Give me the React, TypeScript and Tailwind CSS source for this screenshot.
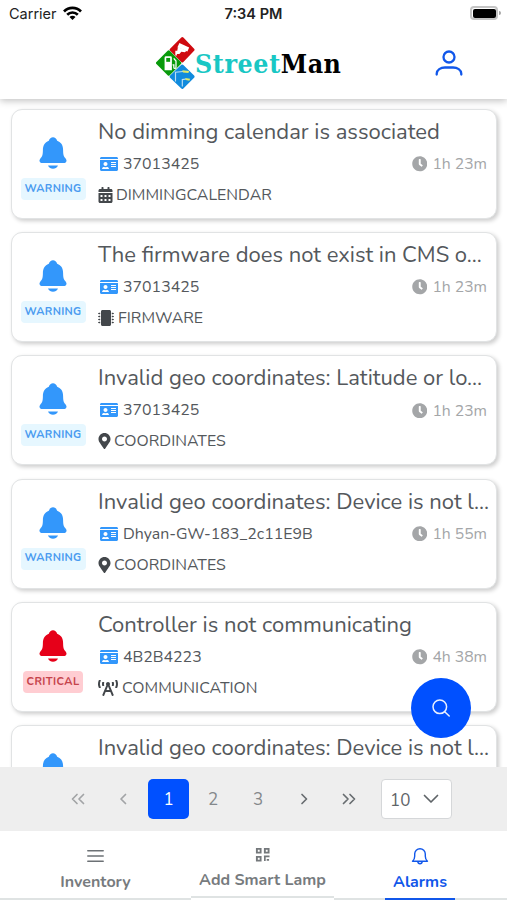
import React from "react";
import { FaIdCard, FaCalendarAlt, FaMicrochip, FaMapMarkerAlt, FaBroadcastTower, FaClock } from "react-icons/fa";
import { IoNotifications } from "react-icons/io5";

type Alarm = {
  title: string;
  critical?: boolean;
  details?: {
    id: string;
    age: string;
    kind: string;
    kindClass: string;
    icon: React.ReactNode;
  };
};

const pin = <FaMapMarkerAlt className="h-4 w-[13px]" />;

const alarms: Alarm[] = [
  { title: "No dimming calendar is associated", details: { id: "37013425", age: "1h 23m", kind: "DIMMINGCALENDAR", kindClass: "ml-[3px]", icon: <FaCalendarAlt className="h-4 w-[15px]" /> } },
  { title: "The firmware does not exist in CMS o...", details: { id: "37013425", age: "1h 23m", kind: "FIRMWARE", kindClass: "ml-[4px]", icon: <FaMicrochip className="h-4 w-4" /> } },
  { title: "Invalid geo coordinates: Latitude or lo...", details: { id: "37013425", age: "1h 23m", kind: "COORDINATES", kindClass: "ml-[3px]", icon: pin } },
  { title: "Invalid geo coordinates: Device is not l...", details: { id: "Dhyan-GW-183_2c11E9B", age: "1h 55m", kind: "COORDINATES", kindClass: "ml-[3px]", icon: pin } },
  { title: "Controller is not communicating", critical: true, details: { id: "4B2B4223", age: "4h 38m", kind: "COMMUNICATION", kindClass: "ml-[4px]", icon: <FaBroadcastTower className="h-4 w-5" /> } },
  { title: "Invalid geo coordinates: Device is not l..." },
];

function AlarmCard({ alarm }: { alarm: Alarm }) {
  const { title, critical, details } = alarm;
  return (
    <article className="flex h-[110px] shrink-0 rounded-[11px] border border-[#e1e3e4] bg-white shadow-[2px_2px_4px_rgba(0,0,0,0.2)]">
      <div className="flex w-[82px] shrink-0 flex-col items-center pt-[25px]">
        <IoNotifications className={critical ? "h-[36px] w-[36px] text-[#e60019]" : "h-[36px] w-[36px] text-[#3397fb]"} />
        {details && (
          <span
            className={
              critical
                ? "mt-[7px] flex h-[22px] w-[60px] items-center justify-center rounded-[4px] bg-[#ffcdd2] text-[11px] font-bold tracking-[0.4px] text-[#c5434b]"
                : "mt-[7px] flex h-[22px] w-[65px] items-center justify-center rounded-[4px] bg-[#e6f7ff] text-[11px] font-bold tracking-[0.3px] text-[#4a9bf0]"
            }
          >
            {critical ? "CRITICAL" : "WARNING"}
          </span>
        )}
      </div>
      <div className="min-w-0 flex-1 pl-1 pr-[9px] text-[15.900px] text-[#54585c]">
        <h2 className="mt-[8px] h-7 whitespace-nowrap text-[22px] leading-7">{title}</h2>
        {details && (
          <>
            <div className="mt-[6px] flex h-6 items-center pl-[2px]">
              <FaIdCard className="h-4 w-[18px] text-[#3397fb]" />
              <span className="ml-[5px] pt-[2px]">{details.id}</span>
              <span className="ml-auto flex items-center text-[#a4a6a8]">
                <FaClock className="mr-[5px] h-[15.500px] w-[15.500px]" />
                <span className="pt-[2px] text-[15.700px]">{details.age}</span>
              </span>
            </div>
            <div className="mt-[7px] flex h-6 items-center text-[#43474b]">
              {details.icon}
              <span className={`pt-[2px] text-[#54585c] ${details.kindClass}`}>{details.kind}</span>
            </div>
          </>
        )}
      </div>
    </article>
  );
}

function Logo() {
  return (
    <div className="flex items-center">
      <svg className="h-[54px] w-[39px]" viewBox="0 0 40 54">
        <g strokeLinejoin="round" strokeWidth="3">
          <path d="M27 2 38 13.500 27 25 15.500 13.500Z" fill="#cf0a10" stroke="#cf0a10" />
          <path d="M13 15.500 24.500 27 13 38.500 1.500 27Z" fill="#089a0b" stroke="#089a0b" />
          <path d="M27 30 38 41 27 52 15.500 41Z" fill="#118bdd" stroke="#118bdd" />
        </g>
        <path d="m24 6.500 10 4.500-1.800 4.200L22 10.800Z" fill="#fff" />
        <path d="m22.500 10.500 9 4-2 1.600-3.500-.6-2 2.300h-2.600v1.400h-1.600v-4.800h2Z" fill="#fff" />
        <path d="M8.800 34.500V21.500q0-1.500 1.500-1.500h4.500q1.500 0 1.500 1.500v13Z" fill="#fff" />
        <path d="M17 29h1.300v2.500c0 1.500 2.200 1.500 2.200 0V25l-2.300-2.800" fill="none" stroke="#fff" strokeWidth="1.300" />
        <path d="M10.500 21.800h4v4h-4Z" fill="#089a0b" />
        <path d="M20 46V36.500l8-.8M27 51v-7l4-.6" fill="none" stroke="#b9def3" strokeWidth="1.200" />
        <path d="m27 34.500 7 .6-.8 2.200-5.500-.6Z M30 42.500l5 .6-.8 2-3.600-.6Z" fill="#e2e968" />
      </svg>
      <div className="flex h-[34px] whitespace-nowrap pt-px font-['DejaVu_Serif_Condensed','DejaVu_Serif','Liberation_Serif',serif] text-[26.500px] font-bold leading-[34px] [font-stretch:condensed]">
        <span className="tracking-[0.600px] text-[#19c7c4]">Street</span>
        <span className="tracking-[0.500px] text-black">Man</span>
      </div>
    </div>
  );
}

function Chevron({ d, muted }: { d: string; muted?: boolean }) {
  return (
    <svg className={muted ? "size-4 text-[#a2a4a6]" : "size-4 text-[#686d70]"} viewBox="0 0 16 16" fill="none" stroke="currentColor" strokeWidth="1.700" strokeLinecap="round" strokeLinejoin="round">
      <path d={d} />
    </svg>
  );
}

function Paginator() {
  return (
    <div className="flex h-[64px] shrink-0 items-center bg-[#eeeeee] pl-[58px] text-[17px] text-[#84888b]">
      <button className="flex w-10 justify-center"><Chevron muted d="M7 3.500 2.500 8l4.500 4.500M13.500 3.500 9 8l4.500 4.500" /></button>
      <button className="ml-[5px] flex w-10 justify-center"><Chevron muted d="M10.500 3.500 6 8l4.500 4.500" /></button>
      <button className="ml-[5px] h-10 w-[41px] rounded-[5px] bg-[#0050ff] pt-px text-white">1</button>
      <button className="ml-[4px] w-10 pt-px">2</button>
      <button className="ml-[5px] w-10 pt-px">3</button>
      <button className="ml-[6px] flex w-10 justify-center"><Chevron d="M6 3.500 10.500 8 6 12.500" /></button>
      <button className="ml-[5px] flex w-10 justify-center"><Chevron d="M2.500 3.500 7 8l-4.500 4.500M9 3.500 13.500 8 9 12.500" /></button>
      <button className="ml-[12px] flex h-10 w-[71px] items-center rounded-[4px] border border-[#d5d7d9] bg-white pl-[8px] text-[#5f6468]">
        <span className="pt-[4px]">10</span>
        <svg className="ml-[13px] h-4 w-4" viewBox="0 0 16 16" fill="none" stroke="currentColor" strokeWidth="1.700" strokeLinecap="round" strokeLinejoin="round"><path d="m1.500 4.500 6.500 6.500 6.500-6.500" /></svg>
      </button>
    </div>
  );
}

export default function App() {
  return (
    <div className="flex h-[900px] w-[507px] flex-col overflow-hidden bg-white font-['Nunito',Lato,'Open_Sans',sans-serif]">
      <header className="relative z-10 h-[99px] shrink-0 bg-white shadow-[0_2px_7px_rgba(0,0,0,0.24)]">
        <div className="grid h-[28px] grid-cols-3 items-center font-['Inter','Liberation_Sans',sans-serif] text-[14px] text-[#222]">
          <div className="flex items-center pl-[9px]">
            <span className="text-[14.500px]">Carrier</span>
            <svg className="mb-[2px] ml-[6px] h-[14px] w-[19px]" viewBox="0 0 19 14" fill="none" stroke="#000" strokeWidth="2.700">
              <path d="M1 5.500a12 12 0 0 1 17 0M4.200 8.700a7.500 7.500 0 0 1 10.600 0" />
              <path d="M9.500 14 6.500 11a4.200 4.200 0 0 1 6 0Z" fill="#000" stroke="none" />
            </svg>
          </div>
          <div className="pb-px text-center text-[14.500px] font-semibold">7:34 PM</div>
          <div className="flex items-center justify-end pb-[2px] pr-[6px]">
            <div className="h-[14px] w-[28px] rounded-[4px] border-2 border-[#c4c4c4] p-[0.500px]"><div className="h-full w-full rounded-[2px] bg-black" /></div>
            <div className="ml-px h-[4px] w-[2px] rounded-r bg-[#a5a5a5]" />
          </div>
        </div>
        <div className="flex h-[70px] items-center justify-between pl-[156px] pr-[44px]">
          <Logo />
          <svg className="h-[26px] w-[28px]" viewBox="0 0 28 26" fill="none" stroke="#1157ea" strokeWidth="2.300" strokeLinecap="round">
            <circle cx="14" cy="7" r="5.500" />
            <path d="M1.700 24.500v-.7c0-4 4-6.300 8.300-6.300h8c4.300 0 8.300 2.300 8.300 6.300v.7" />
          </svg>
        </div>
      </header>
      <main className="flex min-h-0 flex-1 flex-col gap-[13.200px] overflow-hidden pl-[11px] pr-[10px] pt-[10px]">
        {alarms.map((alarm, i) => <AlarmCard key={i} alarm={alarm} />)}
      </main>
      <button className="absolute left-[411px] top-[678px] z-20 flex h-[60px] w-[60px] items-center justify-center rounded-full bg-[#0050ff]">
        <svg className="h-[18px] w-[18px]" viewBox="0 0 18 18" fill="none" stroke="#e8efff" strokeWidth="1.500" strokeLinecap="round"><circle cx="7.800" cy="7.800" r="6.800" /><path d="m12.700 12.700 4.500 4.300" /></svg>
      </button>
      <Paginator />
      <nav className="flex h-[69px] shrink-0 items-start text-[16px] font-bold text-[#777b7e]">
        <div className="flex h-[69px] w-[191px] flex-col items-center border-b-2 border-[#dfe3e3] pt-[17px]">
          <svg className="h-4 w-[17px]" viewBox="0 0 17 16" stroke="#6c7175" strokeWidth="1.500" strokeLinecap="round"><path d="M.8 2.700h15.400M.8 8h15.400M.8 13.300h15.400" /></svg>
          <span className="mt-[6px]">Inventory</span>
        </div>
        <div className="flex h-[67px] w-[143px] flex-col items-center border-b-2 border-[#dfe3e3] pt-[16px]">
          <svg className="h-[15px] w-[15px]" viewBox="0 0 16 16" fill="none" stroke="#74787b" strokeWidth="2">
            <path d="M2 2h4v4H2ZM10.500 2h4v4h-4ZM2 10.500h4v4H2Z" />
            <path d="M9.500 10h6M10.500 9v6M12.500 13.700h2.500" strokeWidth="1.800" />
          </svg>
          <span className="mt-[6px]">Add Smart Lamp</span>
        </div>
        <div className="flex h-[69px] w-[173px] justify-center border-b-2 border-[#dfe3e3]">
          <div className="-ml-px flex h-[69px] w-[70px] shrink-0 flex-col items-center border-b-2 border-[#1157ea] pt-[16px] text-[#1157ea]">
            <svg className="h-[18px] w-[18px]" viewBox="0 0 18 18" fill="none" stroke="currentColor" strokeWidth="1.400" strokeLinecap="round" strokeLinejoin="round">
              <path d="M1.500 14.200c1.800-1.300 2.200-2.700 2.200-4.900V7a5.300 5.300 0 0 1 10.600 0v2.300c0 2.200.4 3.600 2.200 4.900ZM6.700 14.400c.2 1.600 1 2.400 2.300 2.400s2.100-.8 2.300-2.400" />
            </svg>
            <span className="mt-[5px]">Alarms</span>
          </div>
        </div>
      </nav>
    </div>
  );
}
